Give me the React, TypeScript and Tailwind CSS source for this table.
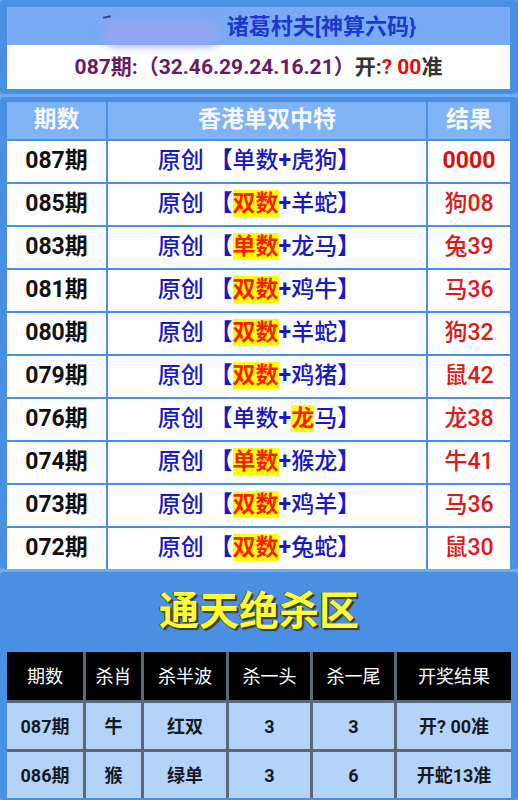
import React from 'react';

type Row = {
    qi: string;
    hl: 'none' | 'odd' | 'zodiac';
    dan: string;
    a: string;
    b: string;
    res: string;
};

const rows: Row[] = [
    { qi: '087期', dan: '单数', a: '虎', b: '狗', hl: 'none', res: '0000' },
    { qi: '085期', dan: '双数', a: '羊', b: '蛇', hl: 'odd', res: '狗08' },
    { qi: '083期', dan: '单数', a: '龙', b: '马', hl: 'odd', res: '兔39' },
    { qi: '081期', dan: '双数', a: '鸡', b: '牛', hl: 'odd', res: '马36' },
    { qi: '080期', dan: '双数', a: '羊', b: '蛇', hl: 'odd', res: '狗32' },
    { qi: '079期', dan: '双数', a: '鸡', b: '猪', hl: 'odd', res: '鼠42' },
    { qi: '076期', dan: '单数', a: '龙', b: '马', hl: 'zodiac', res: '龙38' },
    { qi: '074期', dan: '单数', a: '猴', b: '龙', hl: 'odd', res: '牛41' },
    { qi: '073期', dan: '双数', a: '鸡', b: '羊', hl: 'odd', res: '马36' },
    { qi: '072期', dan: '双数', a: '兔', b: '蛇', hl: 'odd', res: '鼠30' },
];

const killRows = [
    ['087期', '牛', '红双', '3', '3', '开? 00准'],
    ['086期', '猴', '绿单', '3', '6', '开蛇13准'],
];

const font = { fontFamily: 'Roboto, "Noto Sans CJK SC", sans-serif' };

const Mark: React.FC<{ on: boolean; children: React.ReactNode }> = ({ on, children }) =>
    on ? <span className="bg-[#ffff00] text-[#ff1a00] font-bold">{children}</span> : <>{children}</>;

const App: React.FC = () => {
    return (
        <div className="w-[518px] h-[800px] overflow-hidden bg-[#72a9f0] flex flex-col gap-[3px]" style={font}>
            {/* top title panel */}
            <div className="bg-[#4a90e2] rounded-[4px] pt-[7px] pl-[7px] pr-[8px] pb-[5px]">
                <div className="h-[38px] bg-[#78aaf5] flex items-center justify-center text-[22px] font-bold text-[#1c38d0]">
                    <span className="relative w-[122px] h-[30px] mr-[4px]">
                        <span className="absolute left-[2px] top-[9px] w-[118px] h-[26px] rounded-full bg-[#93a6f2] blur-[5px]"></span>
                        <span className="absolute left-[2px] top-[5px] w-[8px] h-[2px] bg-[#3a4a90] -rotate-12"></span>
                    </span>
                    <span>{'诸葛村夫[神算六码}'}</span>
                </div>
                <div className="h-[44px] bg-white flex items-center justify-center text-[21px] font-bold pt-[2px]">
                    <span className="text-[#6b1a5e]">087期:（32.46.29.24.16.21）</span>
                    <span className="text-[#333333]">开:</span>
                    <span className="text-[#e01010]">? 00</span>
                    <span className="text-[#333333]">准</span>
                </div>
            </div>

            {/* single/double table panel */}
            <div className="bg-[#4a90e2] rounded-[4px] pt-[5px] pl-[7px] pr-[8px] pb-0">
                <div className="grid grid-cols-[99px_318px_82px] gap-x-[2px] gap-y-[2px]">
                    <div className="h-[37px] bg-[#7fb3f6] flex items-center justify-center text-[23px] font-bold text-[#f4f8ff]">期数</div>
                    <div className="h-[37px] bg-[#7fb3f6] flex items-center justify-center text-[23px] font-bold text-[#f4f8ff]">香港单双中特</div>
                    <div className="h-[37px] bg-[#7fb3f6] flex items-center justify-center text-[23px] font-bold text-[#f4f8ff]">结果</div>
                    {rows.map((r, idx) => (
                        <React.Fragment key={r.qi}>
                            <div className="h-[41px] bg-white flex items-center justify-center text-[23px] font-bold text-[#111111]">{r.qi}</div>
                            <div className="h-[41px] bg-white flex items-center justify-center pr-[16px] text-[23px] font-medium text-[#1818c8]">
                                <span className="whitespace-pre">
                                    {'原创 '}
                                    <span className="font-bold">【</span>
                                    <Mark on={r.hl === 'odd'}>{r.dan}</Mark>
                                    <span className="font-bold">+</span>
                                    <Mark on={r.hl === 'zodiac'}>{r.a}</Mark>
                                    {r.b}
                                    <span className="font-bold">】</span>
                                </span>
                            </div>
                            <div
                                className={
                                    idx === 0
                                        ? 'h-[41px] bg-white flex items-center justify-center text-[23px] font-bold text-[#d81010]'
                                        : 'h-[41px] bg-white flex items-center justify-center text-[23px] font-medium text-[#e01818]'
                                }
                            >
                                {r.res}
                            </div>
                        </React.Fragment>
                    ))}
                </div>
            </div>

            {/* kill zone panel */}
            <div className="flex-1 bg-[#4a90e2] rounded-[4px] pl-[7px] pr-[7px]">
                <div className="h-[80px] flex items-center justify-center">
                    <span className="text-[40px] font-bold text-[#ffff33] [text-shadow:1px_1px_0_#3d3d1a,-1px_0_0_#5a5a20,2px_2px_1px_#333]">通天绝杀区</span>
                </div>
                <div className="grid grid-cols-[76px_55px_82px_81px_81px_114px] gap-[3px] bg-[#5c6876]">
                    {['期数', '杀肖', '杀半波', '杀一头', '杀一尾', '开奖结果'].map((h) => (
                        <div key={h} className="h-[48px] bg-black flex items-center justify-center text-[18px] text-white">{h}</div>
                    ))}
                    {killRows.map((kr) =>
                        kr.map((c, i) => (
                            <div key={kr[0] + i} className="h-[46px] bg-[#b4d3f8] flex items-center justify-center text-[18px] font-bold text-[#141a24]">{c}</div>
                        ))
                    )}
                </div>
            </div>
        </div>
    );
};

export default App;
